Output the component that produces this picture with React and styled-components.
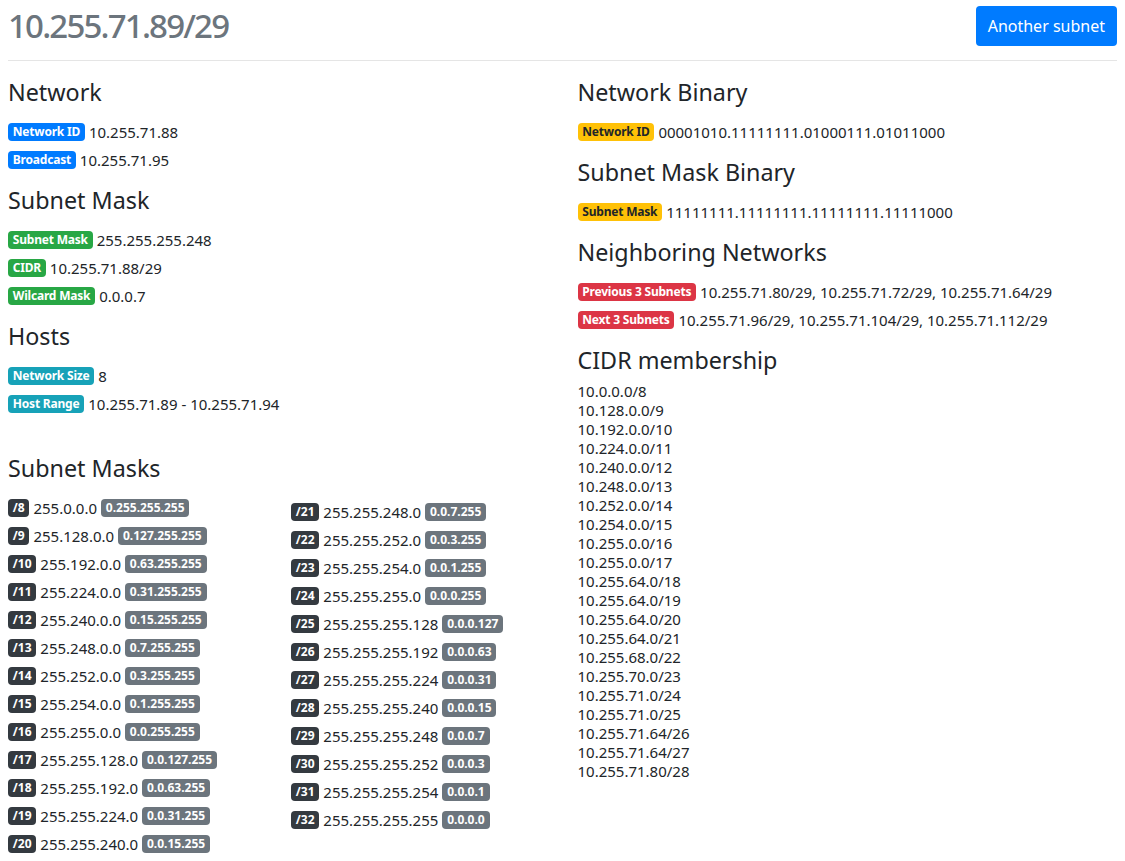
import React from 'react'
import styled, { createGlobalStyle } from 'styled-components'

const GlobalStyle = createGlobalStyle`
  body {
    margin: 0;
    background: #ffffff;
    color: #212529;
    font-family: "Noto Sans", "Open Sans", sans-serif;
    font-size: 15px;
  }
`

const COLORS = {
  primary: { bg: '#007bff', fg: '#ffffff' },
  success: { bg: '#28a745', fg: '#ffffff' },
  info: { bg: '#17a2b8', fg: '#ffffff' },
  warning: { bg: '#ffc107', fg: '#212529' },
  danger: { bg: '#dc3545', fg: '#ffffff' },
  dark: { bg: '#343a40', fg: '#ffffff' },
  secondary: { bg: '#6c757d', fg: '#ffffff' },
}

const Page = styled.div`
  padding: 0 8px;
`

const Header = styled.header`
  display: flex;
  justify-content: space-between;
  align-items: center;
  padding-top: 6px;
  height: 40px;
`

const Title = styled.h1`
  margin: 0;
  font-size: 33px;
  font-weight: 500;
  letter-spacing: -1.8px;
  line-height: 40px;
  color: #6c757d;
`

const PrimaryButton = styled.button`
  height: 40px;
  padding: 0 12px;
  border: none;
  border-radius: 4px;
  background: #007bff;
  color: #fff;
  font-family: inherit;
  font-size: 16px;
  cursor: pointer;
`

const Rule = styled.hr`
  margin: 14px 0 17px;
  border: 0;
  border-top: 1px solid #e5e5e5;
`

const Columns = styled.div`
  display: grid;
  grid-template-columns: 1fr 1fr;
  column-gap: 30px;
`

const Column = styled.section``

const Heading = styled.h4`
  margin: ${p => p.$mt ?? 12}px 0 ${p => p.$mb ?? 11}px;
  font-size: 23.3px;
  font-weight: 400;
  line-height: 29px;
  &:first-child {
    margin-top: 0;
  }
`

const InfoRow = styled.div`
  display: flex;
  align-items: center;
  gap: 4px;
  height: 28px;
  white-space: nowrap;
`

const Badge = styled.span`
  display: inline-block;
  padding: 3px 4.8px;
  border-radius: 4px;
  font-size: 12px;
  font-weight: 700;
  letter-spacing: ${p => (p.$tight ? '-0.2px' : '0')};
  line-height: 12px;
  background: ${p => COLORS[p.$variant].bg};
  color: ${p => COLORS[p.$variant].fg};
`

const MaskGrid = styled.div`
  display: grid;
  grid-template-columns: 283px 1fr;
`

const MaskColumn = styled.div`
  padding-top: ${p => p.$offset || 0}px;
`

const CidrList = styled.div`
  line-height: 19px;
`

const toIp = n => [24, 16, 8, 0].map(s => (n >>> s) & 255).join('.')

const masks = Array.from({ length: 25 }, (_, i) => {
  const bits = i + 8
  const mask = bits === 32 ? 0xffffffff : (0xffffffff << (32 - bits)) >>> 0
  return { bits, mask: toIp(mask), wild: toIp(~mask >>> 0) }
})

const cidrs = [
  '10.0.0.0/8', '10.128.0.0/9', '10.192.0.0/10', '10.224.0.0/11', '10.240.0.0/12',
  '10.248.0.0/13', '10.252.0.0/14', '10.254.0.0/15', '10.255.0.0/16', '10.255.0.0/17',
  '10.255.64.0/18', '10.255.64.0/19', '10.255.64.0/20', '10.255.64.0/21', '10.255.68.0/22',
  '10.255.70.0/23', '10.255.71.0/24', '10.255.71.0/25', '10.255.71.64/26', '10.255.71.64/27',
  '10.255.71.80/28',
]

const Info = ({ label, variant, children }) => (
  <InfoRow>
    <Badge $variant={variant} $tight>{label}</Badge>
    <span>{children}</span>
  </InfoRow>
)

const MaskRow = ({ bits, mask, wild }) => (
  <InfoRow>
    <Badge $variant="dark">/{bits}</Badge>
    <span>{mask}</span>
    <Badge $variant="secondary">{wild}</Badge>
  </InfoRow>
)

export default function App() {
  return (
    <Page>
      <GlobalStyle />
      <Header>
        <Title>10.255.71.89/29</Title>
        <PrimaryButton>Another subnet</PrimaryButton>
      </Header>
      <Rule />
      <Columns>
        <Column>
          <Heading>Network</Heading>
          <Info label="Network ID" variant="primary">10.255.71.88</Info>
          <Info label="Broadcast" variant="primary">10.255.71.95</Info>

          <Heading>Subnet Mask</Heading>
          <Info label="Subnet Mask" variant="success">255.255.255.248</Info>
          <Info label="CIDR" variant="success">10.255.71.88/29</Info>
          <Info label="Wilcard Mask" variant="success">0.0.0.7</Info>

          <Heading>Hosts</Heading>
          <Info label="Network Size" variant="info">8</Info>
          <Info label="Host Range" variant="info">10.255.71.89 - 10.255.71.94</Info>

          <Heading $mt={36}>Subnet Masks</Heading>
          <MaskGrid>
            <MaskColumn>
              {masks.slice(0, 13).map(m => <MaskRow key={m.bits} {...m} />)}
            </MaskColumn>
            <MaskColumn $offset={4}>
              {masks.slice(13).map(m => <MaskRow key={m.bits} {...m} />)}
            </MaskColumn>
          </MaskGrid>
        </Column>

        <Column>
          <Heading>Network Binary</Heading>
          <Info label="Network ID" variant="warning">00001010.11111111.01000111.01011000</Info>

          <Heading>Subnet Mask Binary</Heading>
          <Info label="Subnet Mask" variant="warning">11111111.11111111.11111111.11111000</Info>

          <Heading>Neighboring Networks</Heading>
          <Info label="Previous 3 Subnets" variant="danger">
            10.255.71.80/29, 10.255.71.72/29, 10.255.71.64/29
          </Info>
          <Info label="Next 3 Subnets" variant="danger">
            10.255.71.96/29, 10.255.71.104/29, 10.255.71.112/29
          </Info>

          <Heading $mb={7}>CIDR membership</Heading>
          <CidrList>
            {cidrs.map(c => <div key={c}>{c}</div>)}
          </CidrList>
        </Column>
      </Columns>
    </Page>
  )
}
